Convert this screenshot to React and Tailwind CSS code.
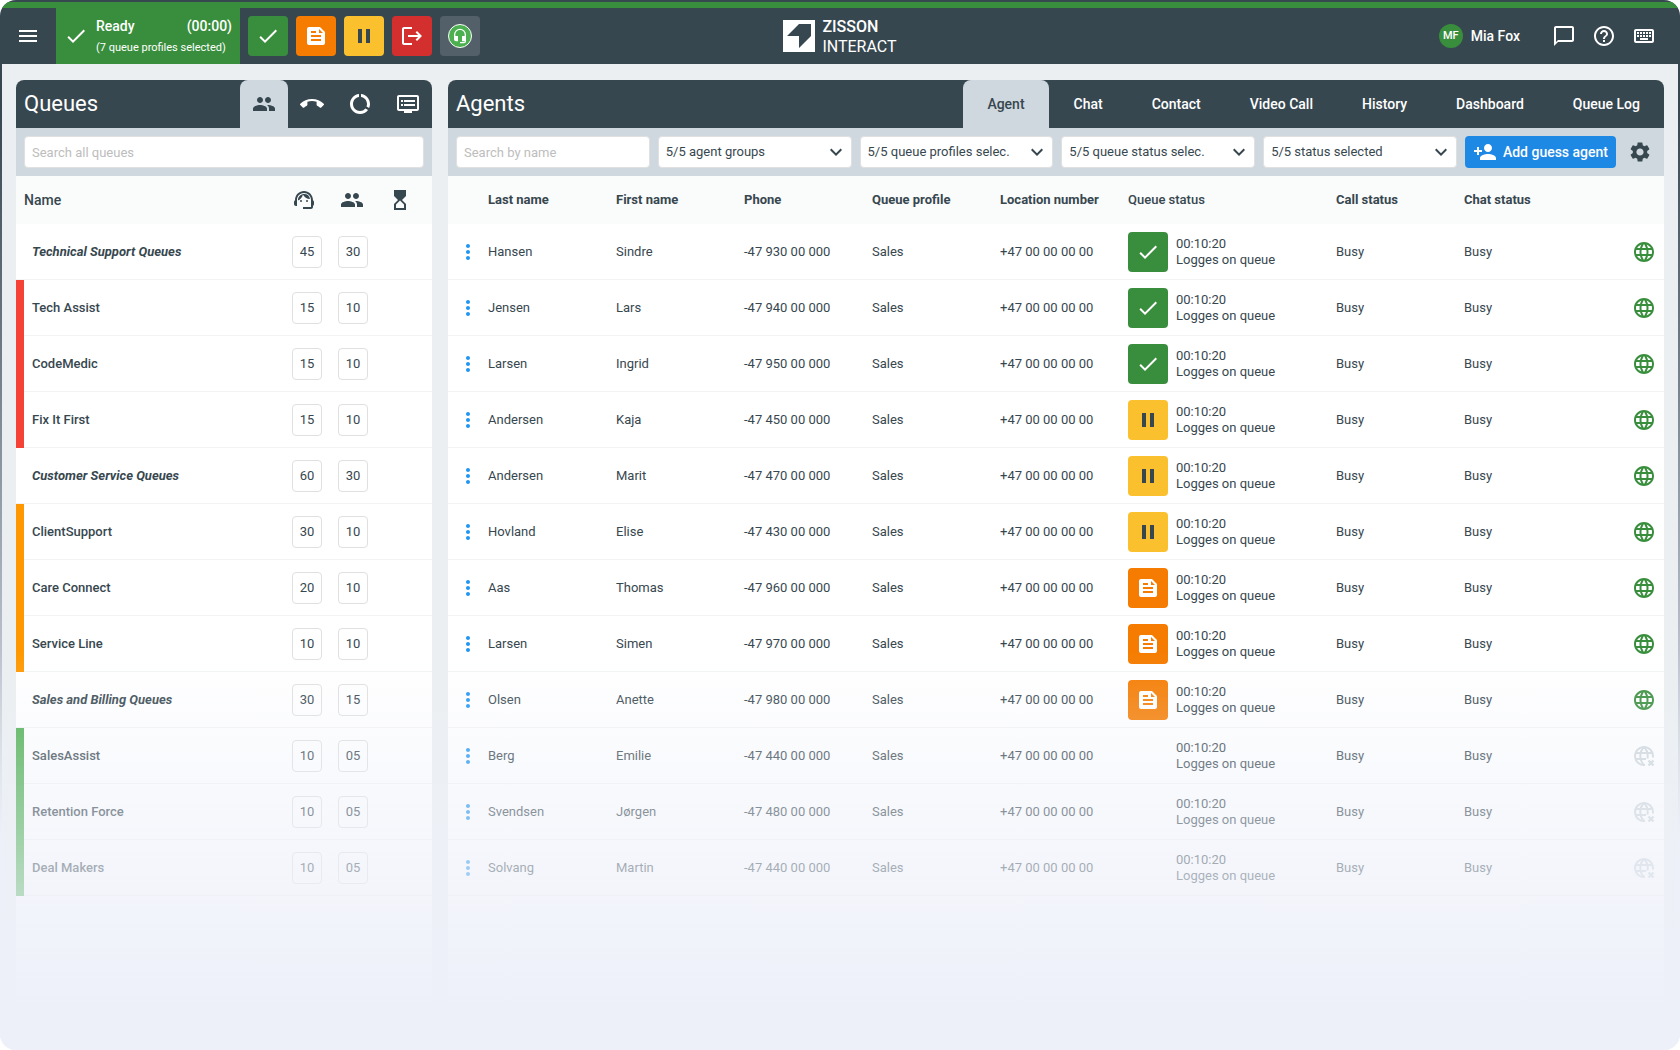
import React from "react";
import {
  MdMenu, MdCheck, MdFeed, MdPause, MdLogout, MdHeadsetMic, MdPeople, MdCallEnd,
  MdDataUsage, MdDvr, MdSupportAgent, MdHourglassTop, MdChatBubbleOutline, MdHelpOutline,
  MdOutlineKeyboard, MdPersonAdd, MdSettings, MdLanguage, MdMoreVert, MdKeyboardArrowDown,
} from "react-icons/md";

const queues = [
  { name: "Technical Support Queues", a: "45", b: "30", group: true },
  { name: "Tech Assist", a: "15", b: "10", bar: "bg-[#f44336]" },
  { name: "CodeMedic", a: "15", b: "10", bar: "bg-[#f44336]" },
  { name: "Fix It First", a: "15", b: "10", bar: "bg-[#f44336]" },
  { name: "Customer Service Queues", a: "60", b: "30", group: true },
  { name: "ClientSupport", a: "30", b: "10", bar: "bg-[#ff9800]" },
  { name: "Care Connect", a: "20", b: "10", bar: "bg-[#ff9800]" },
  { name: "Service Line", a: "10", b: "10", bar: "bg-[#ff9800]" },
  { name: "Sales and Billing Queues", a: "30", b: "15", group: true },
  { name: "SalesAssist", a: "10", b: "05", bar: "bg-[#4caf50]" },
  { name: "Retention Force", a: "10", b: "05", bar: "bg-[#4caf50]" },
  { name: "Deal Makers", a: "10", b: "05", bar: "bg-[#4caf50]" },
];

const agents = [
  ["Hansen", "Sindre", "-47 930 00 000", "ready"],
  ["Jensen", "Lars", "-47 940 00 000", "ready"],
  ["Larsen", "Ingrid", "-47 950 00 000", "ready"],
  ["Andersen", "Kaja", "-47 450 00 000", "pause"],
  ["Andersen", "Marit", "-47 470 00 000", "pause"],
  ["Hovland", "Elise", "-47 430 00 000", "pause"],
  ["Aas", "Thomas", "-47 960 00 000", "notes"],
  ["Larsen", "Simen", "-47 970 00 000", "notes"],
  ["Olsen", "Anette", "-47 980 00 000", "notes"],
  ["Berg", "Emilie", "-47 440 00 000", null],
  ["Svendsen", "Jørgen", "-47 480 00 000", null],
  ["Solvang", "Martin", "-47 440 00 000", null],
];

const statuses = {
  ready: { Icon: MdCheck, style: "bg-[#388e3c] text-white", label: "Ready" },
  notes: { Icon: MdFeed, style: "bg-[#f57c00] text-white", label: "Notes" },
  pause: { Icon: MdPause, style: "bg-[#fbc02d] text-[#37474f]", label: "Pause" },
  logout: { Icon: MdLogout, style: "bg-[#d32f2f] text-white", label: "Log out" },
};

function StatusTile({ kind }) {
  const { Icon, style } = statuses[kind];
  return (
    <span className={`flex size-10 shrink-0 items-center justify-center rounded ${style}`}>
      <Icon size={24} />
    </span>
  );
}

function GlobeOff() {
  return (
    <svg width="24" height="24" viewBox="0 0 24 24" fill="none" stroke="currentColor" strokeWidth="2" aria-label="Offline">
      <path d="M13 20.950A9 9 0 1 1 21 12v1.500" />
      <path d="M3.500 9h17M3.500 15H14M12 3c-2.600 2.500-3.700 5.500-3.700 9s1.100 6.500 3.700 9M12 3c2.600 2.500 3.700 5.500 3.700 9 0 1-.1 1.700-.3 2.500" />
      <path strokeWidth="2.400" d="M16.500 16.500l5 5M21.500 16.500l-5 5" />
    </svg>
  );
}

function Logo() {
  return (
    <svg width="32" height="32" viewBox="0 0 32 32" aria-hidden="true">
      <path fill="#fff" d="M0 0h32v32H0z" />
      <path fill="#37474f" d="M16 4h12v12L16 28V16H4z" />
    </svg>
  );
}

function TopBar() {
  return (
    <header className="mx-0.5 grid h-14 grid-cols-[1fr_auto_1fr] items-center bg-[#37474f] text-white">
      <div className="flex h-full items-center">
        <button aria-label="Menu" className="flex h-full w-[54px] items-center justify-center pr-0.5">
          <MdMenu size={24} />
        </button>
        <div className="flex h-full w-46 items-center gap-2 bg-[#388e3c] px-2">
          <MdCheck size={24} />
          <div className="flex-1 pt-0.5">
            <div className="flex justify-between text-sm font-medium">
              <span>Ready</span>
              <span>(00:00)</span>
            </div>
            <p className="mt-0.5 text-[11px] leading-5 whitespace-nowrap">(7 queue profiles selected)</p>
          </div>
        </div>
        <div className="flex gap-2 pl-2">
          {Object.keys(statuses).map((k) => (
            <button key={k} aria-label={statuses[k].label}><StatusTile kind={k} /></button>
          ))}
          <button aria-label="Headset" className="flex size-10 items-center justify-center rounded bg-[#546069]">
            <span className="flex size-6 items-center justify-center rounded-full border border-white bg-[#4caf50]">
              <MdHeadsetMic size={16} />
            </span>
          </button>
        </div>
      </div>
      <div className="flex items-center gap-[7px]">
        <Logo />
        <p className="pt-px text-base leading-5">
          <span className="block font-medium">ZISSON</span>
          <span className="block">INTERACT</span>
        </p>
      </div>
      <div className="flex items-center justify-end pr-3.5">
        <span className="mr-2 flex size-6 items-center justify-center rounded-full bg-[#388e3c] text-[11px] font-medium">MF</span>
        <span className="mr-6 text-sm font-medium">Mia Fox</span>
        <button aria-label="Messages" className="flex size-10 items-center justify-center"><MdChatBubbleOutline size={24} /></button>
        <button aria-label="Help" className="flex size-10 items-center justify-center"><MdHelpOutline size={24} /></button>
        <button aria-label="Keyboard" className="flex size-10 items-center justify-center"><MdOutlineKeyboard size={24} /></button>
      </div>
    </header>
  );
}

const cell = "border-b border-[#f2f4f4] p-0";

function QueuesPanel() {
  const tabs = [
    [MdPeople, "People"], [MdCallEnd, "Calls"], [MdDataUsage, "Usage"], [MdDvr, "List"],
  ];
  return (
    <section className="w-[416px] shrink-0 overflow-hidden rounded-t-lg bg-white">
      <div className="flex h-12 items-center bg-[#37474f] pl-2 text-white">
        <h2 className="flex-1 text-[22px] leading-7">Queues</h2>
        {tabs.map(([Icon, label], i) => (
          <button key={label} aria-label={label}
            className={`flex size-12 items-center justify-center ${i === 0 ? "rounded-t-lg bg-[#cfd8df] text-[#37474f]" : ""}`}>
            <Icon size={24} />
          </button>
        ))}
      </div>
      <div className="flex h-12 items-center bg-[#cfd8df] px-2">
        <input aria-label="Search all queues" placeholder="Search all queues"
          className="h-8 w-full rounded border border-[#e0e0e0] bg-white px-[7px] placeholder:text-[#bdbdbd]" />
      </div>
      <table className="w-full table-fixed border-separate border-spacing-0">
        <colgroup>
          <col className="w-2" /><col /><col className="w-[46px]" /><col className="w-[46px]" /><col className="w-14" />
        </colgroup>
        <thead>
          <tr className="h-12 bg-[#fafbfb]">
            <th colSpan={2} className="p-0 pl-2 text-left text-sm font-medium">Name</th>
            <th className="p-0 pr-1.5"><MdSupportAgent className="mx-auto" size={24} aria-label="Agents" /></th>
            <th className="p-0 pr-0.5"><MdPeople className="mx-auto" size={24} aria-label="People" /></th>
            <th className="p-0 pl-3"><MdHourglassTop size={24} aria-label="Waiting" /></th>
          </tr>
        </thead>
        <tbody>
          {queues.map((q) => (
            <tr key={q.name} className="h-14">
              <td className={q.bar ? `p-0 ${q.bar}` : cell}></td>
              <td className={`${cell} ${q.group ? "font-bold italic" : "font-medium"}`}><span className="pl-2">{q.name}</span></td>
              {[q.a, q.b].map((n, i) => (
                <td key={i} className={cell}>
                  <span className="mx-auto flex h-8 w-[30px] items-center justify-center rounded border border-[#e0e0e0]">{n}</span>
                </td>
              ))}
              <td className={cell}></td>
            </tr>
          ))}
        </tbody>
      </table>
    </section>
  );
}

function AgentsPanel() {
  const tabs = ["Agent", "Chat", "Contact", "Video Call", "History", "Dashboard", "Queue Log"];
  const filters = ["5/5 agent groups", "5/5 queue profiles selec.", "5/5 queue status selec.", "5/5 status selected"];
  const heads = ["Last name", "First name", "Phone", "Queue profile", "Location number", "Queue status", "Call status", "Chat status"];
  return (
    <section className="min-w-0 flex-1 overflow-hidden rounded-t-lg bg-white">
      <div className="flex h-12 items-center gap-px bg-[#37474f] pl-2 text-white">
        <h2 className="flex-1 text-[22px] leading-7">Agents</h2>
        {tabs.map((t, i) => (
          <button key={t}
            className={`h-12 px-6 text-sm font-medium whitespace-nowrap ${i === 0 ? "rounded-t-lg bg-[#cfd8df] text-[#37474f]" : ""}`}>
            {t}
          </button>
        ))}
      </div>
      <div className="flex h-12 items-center gap-2 bg-[#cfd8df] px-2">
        <div className="min-w-0 flex-1">
          <input aria-label="Search by name" placeholder="Search by name"
            className="h-8 w-full rounded border border-[#e0e0e0] bg-white px-[7px] placeholder:text-[#bdbdbd]" />
        </div>
        {filters.map((f) => (
          <div key={f} className="relative min-w-0 flex-1">
            <select aria-label={f} className="h-8 w-full appearance-none rounded border border-[#e0e0e0] bg-white pr-8 pl-[7px]">
              <option>{f}</option>
            </select>
            <MdKeyboardArrowDown size={24} className="pointer-events-none absolute top-1 right-1" />
          </div>
        ))}
        <button className="flex h-8 items-center gap-1.5 rounded bg-[#1e88e5] px-2 text-sm font-medium whitespace-nowrap text-white">
          <MdPersonAdd size={24} />
          Add guess agent
        </button>
        <button aria-label="Settings" className="flex size-8 items-center justify-center"><MdSettings size={24} /></button>
      </div>
      <table className="w-full table-fixed border-separate border-spacing-0">
        <colgroup>
          <col className="w-10" />
          <col className="w-32" /><col className="w-32" /><col className="w-32" /><col className="w-32" /><col className="w-32" />
          <col className="w-52" /><col className="w-32" /><col className="w-32" /><col />
        </colgroup>
        <thead>
          <tr className="h-12 bg-[#fafbfb] text-left">
            <td></td>
            {heads.map((h) => (
              <th key={h} className={`p-0 whitespace-nowrap ${h === "Queue status" ? "font-medium" : "font-bold"}`}>{h}</th>
            ))}
            <td></td>
          </tr>
        </thead>
        <tbody>
          {agents.map(([last, first, phone, status], i) => (
            <tr key={i} className="h-14">
              <td className={cell}>
                <button aria-label={`Options for ${first} ${last}`} className="ml-2 flex text-[#2196f3]"><MdMoreVert size={24} /></button>
              </td>
              <td className={cell}>{last}</td>
              <td className={cell}>{first}</td>
              <td className={cell}>{phone}</td>
              <td className={cell}>Sales</td>
              <td className={cell}>+47 00 00 00 00</td>
              <td className={cell}>
                <div className="flex items-center gap-2">
                  {status ? <StatusTile kind={status} /> : <span className="size-10" />}
                  <div>
                    <p>00:10:20</p>
                    <p>Logges on queue</p>
                  </div>
                </div>
              </td>
              <td className={cell}>Busy</td>
              <td className={cell}>Busy</td>
              <td className={cell}>
                <div className="flex justify-end pr-2">
                  {status
                    ? <span className="text-[#388e3c]"><MdLanguage size={24} aria-label="Online" /></span>
                    : <span className="text-[#cfd8dc]"><GlobeOff /></span>}
                </div>
              </td>
            </tr>
          ))}
        </tbody>
      </table>
    </section>
  );
}

export default function App() {
  return (
    <div className="min-h-screen bg-white font-['Roboto',sans-serif] text-[13px] leading-4 text-[#37474f]">
      <div className="relative flex min-h-screen flex-col overflow-hidden rounded-2xl bg-linear-to-b from-[#37474f] from-10% to-[#edf0f9] to-80% pt-0.5">
        <div className="mx-0.5 h-1.5 rounded-t-2xl bg-[#388e3c]" />
        <TopBar />
        <main className="mx-0.5 flex flex-1 gap-4 bg-[#eceff1] px-3.5 pt-4">
          <QueuesPanel />
          <AgentsPanel />
        </main>
        <div className="pointer-events-none absolute inset-x-0 bottom-0 h-[38%] bg-linear-to-b from-[#edf0f9]/0 to-[#edf0f9] to-90%" />
      </div>
    </div>
  );
}
